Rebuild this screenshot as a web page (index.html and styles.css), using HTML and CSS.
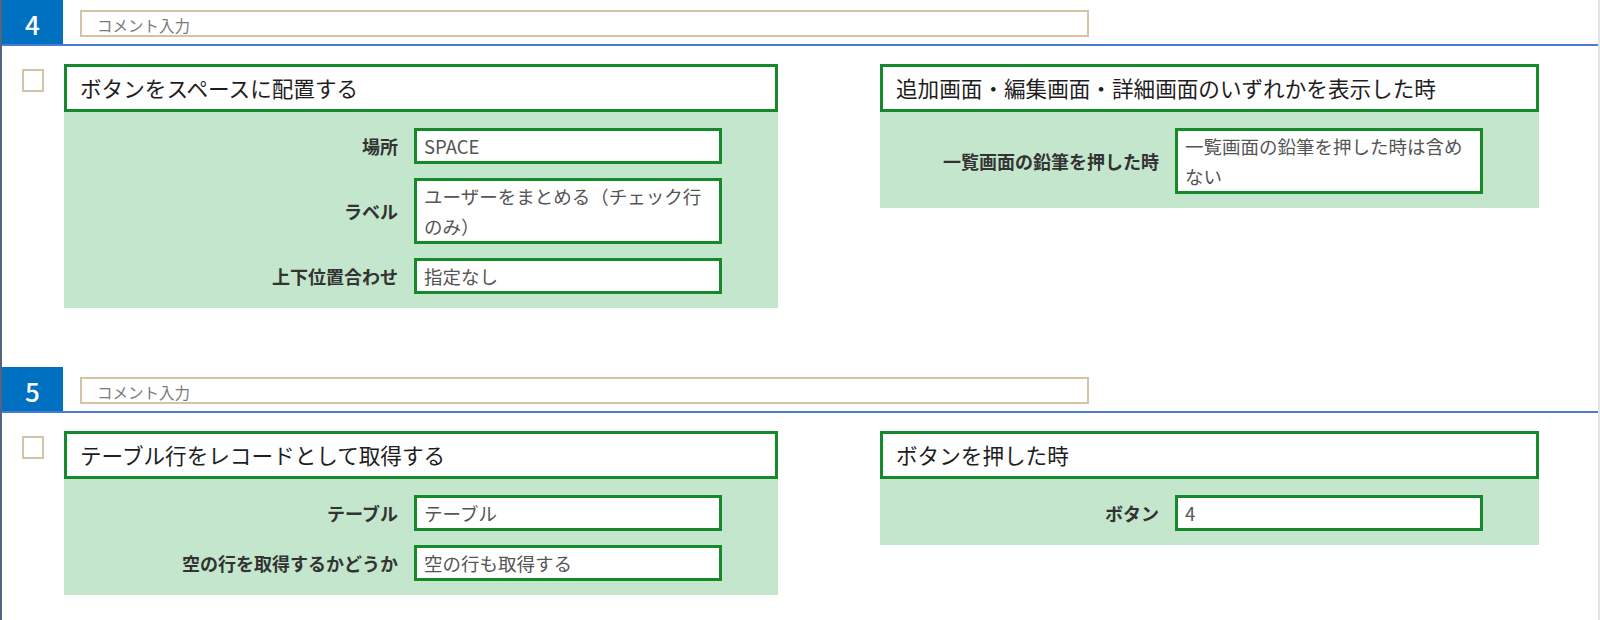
FILE: index.html
```html
<!DOCTYPE html>
<html lang="ja">
<head>
<meta charset="utf-8">
<title>Steps</title>
<link rel="stylesheet" href="styles.css">
</head>
<body>
<div class="page">
  <section class="step">
    <header class="step-head">
      <div class="step-no">4</div>
      <div class="comment">コメント入力</div>
    </header>
    <div class="step-body">
      <span class="check"></span>
      <div class="card card-action">
        <div class="card-title">ボタンをスペースに配置する</div>
        <div class="card-fields">
          <div class="f-label">場所</div>
          <div class="f-value">SPACE</div>
          <div class="f-label">ラベル</div>
          <div class="f-value">ユーザーをまとめる（チェック行のみ）</div>
          <div class="f-label">上下位置合わせ</div>
          <div class="f-value">指定なし</div>
        </div>
      </div>
      <div class="card card-trigger">
        <div class="card-title">追加画面・編集画面・詳細画面のいずれかを表示した時</div>
        <div class="card-fields">
          <div class="f-label">一覧画面の鉛筆を押した時</div>
          <div class="f-value">一覧画面の鉛筆を押した時は含めない</div>
        </div>
      </div>
    </div>
  </section>
  <section class="step">
    <header class="step-head">
      <div class="step-no">5</div>
      <div class="comment">コメント入力</div>
    </header>
    <div class="step-body">
      <span class="check"></span>
      <div class="card card-action">
        <div class="card-title">テーブル行をレコードとして取得する</div>
        <div class="card-fields">
          <div class="f-label">テーブル</div>
          <div class="f-value">テーブル</div>
          <div class="f-label">空の行を取得するかどうか</div>
          <div class="f-value">空の行も取得する</div>
        </div>
      </div>
      <div class="card card-trigger">
        <div class="card-title">ボタンを押した時</div>
        <div class="card-fields">
          <div class="f-label">ボタン</div>
          <div class="f-value">4</div>
        </div>
      </div>
    </div>
  </section>
</div>
</body>
</html>
```
FILE: styles.css
```css
html, body {
  margin: 0;
  padding: 0;
  background: #ffffff;
}
body {
  font-family: "Noto Sans CJK JP", "Noto Sans", sans-serif;
  color: #222;
}
.page {
  border-left: 2px solid #55647e;
  border-right: 2px solid #e4e4e4;
  height: 620px;
  box-sizing: border-box;
  overflow: hidden;
}
.step {
  padding-bottom: 59px;
}
.step:last-child {
  padding-bottom: 0;
}
.step-head {
  display: flex;
  align-items: flex-start;
  height: 44px;
  border-bottom: 2px solid #4a7bcf;
}
.step-no {
  width: 61px;
  height: 44px;
  background: #0070c0;
  color: #fff;
  font-size: 26px;
  font-weight: 500;
  display: flex;
  align-items: center;
  justify-content: center;
  line-height: 1;
  padding-top: 3px;
  box-sizing: border-box;
}
.comment {
  margin-left: 17px;
  margin-top: 10px;
  width: 1009px;
  height: 27px;
  box-sizing: border-box;
  border: 2px solid #d6c3a7;
  padding: 0 15px;
  font-size: 15.5px;
  line-height: 26px;
  color: #7a7a7a;
  overflow: hidden;
}
.step-body {
  display: flex;
  align-items: flex-start;
  padding-top: 18px;
  padding-left: 20px;
}
.check {
  width: 22px;
  height: 23px;
  box-sizing: border-box;
  border: 2px solid #d5c3a9;
  margin-top: 5px;
  background: #fff;
  flex: none;
}
.card {
  flex: none;
}
.card-action {
  width: 714px;
  margin-left: 20px;
}
.card-trigger {
  width: 659px;
  margin-left: 102px;
}
.card-title {
  height: 48px;
  box-sizing: border-box;
  border: 3px solid #16892a;
  background: #fff;
  padding: 0 13px;
  font-size: 21.6px;
  line-height: 42px;
  color: #1e1e1e;
  white-space: nowrap;
}
.card-fields {
  background: #c3e6cd;
  display: grid;
  grid-template-columns: 1fr 308px;
  column-gap: 16px;
  row-gap: 14px;
  padding: 16px 56px 14px 0;
  align-items: center;
}
.f-label {
  text-align: right;
  font-size: 18px;
  font-weight: 700;
  color: #333;
  white-space: nowrap;
}
.f-value {
  border: 3px solid #16892a;
  background: #fff;
  padding: 0 7px;
  font-size: 18.5px;
  line-height: 30px;
  color: #555;
}
```
